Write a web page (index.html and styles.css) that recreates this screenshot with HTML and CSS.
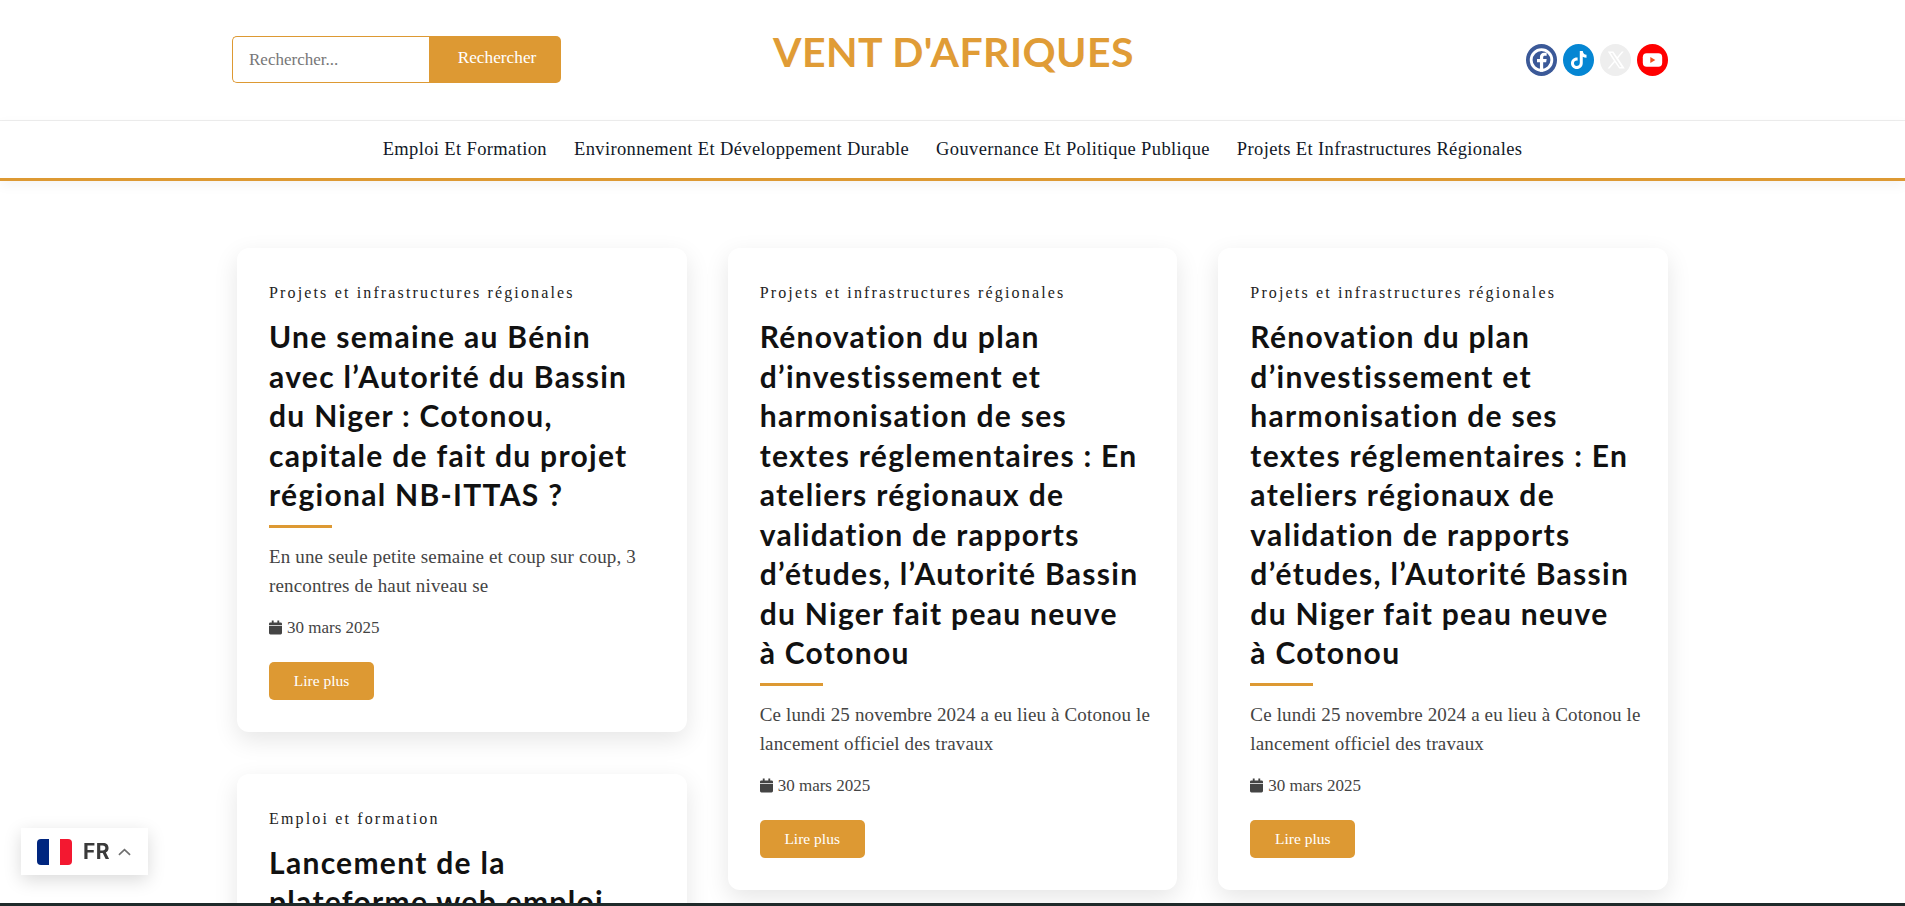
FILE: index.html
```html
<!DOCTYPE html>
<html lang="fr">
<head>
<meta charset="utf-8">
<title>Vent d'Afriques</title>
<link rel="stylesheet" href="styles.css">
</head>
<body>
<header class="masthead">
  <div class="masthead-inner">
    <form class="search">
      <input class="search-input" type="text" placeholder="Rechercher...">
      <button class="search-btn" type="button">Rechercher</button>
    </form>
    <a class="logo">VENT D'AFRIQUES</a>
    <div class="socials">
      <a class="social fb"><svg viewBox="0 0 24 24"><circle cx="12" cy="12" r="8" fill="none" stroke="#fff" stroke-width="2.200"/><path fill="#fff" d="M13.300 21v-7.300h2.300l.4-2.500h-2.700V10c0-.8.3-1.300 1.400-1.300H16V6.500c-.4-.1-1.100-.2-1.900-.2-2 0-3.300 1.200-3.300 3.400v1.500H8.500v2.500h2.300V21z"/></svg></a>
      <a class="social tt"><svg viewBox="0 0 24 24"><path fill="#fff" d="M13 5h2.300c.2 1.700 1.200 2.800 2.900 3v2.300c-1.100 0-2.100-.3-2.900-.9v4.900c0 2.700-2 4.700-4.600 4.700S6.200 17 6.200 14.500c0-2.700 2.300-4.700 5.100-4.400v2.400c-1.500-.3-2.800.6-2.800 2 0 1.200.9 2.100 2 2.100 1.300 0 2.500-.8 2.500-2.500z"/></svg></a>
      <a class="social xx"><svg viewBox="0 0 24 24"><path fill="#fff" d="M6 5.500h4.300l3 4.200 3.600-4.200h1.500l-4.400 5.200 5.200 7.800h-4.300l-3.400-4.800-4.100 4.800H5.900l4.900-5.800zm2.200 1.100 7.100 10.800h1.400L9.600 6.600z"/></svg></a>
      <a class="social yt"><svg viewBox="0 0 24 24"><rect x="4.500" y="6.800" width="15" height="10.400" rx="3" fill="#fff"/><path fill="#f2501e" d="M10.300 9.700v4.600l3.900-2.300z"/></svg></a>
    </div>
  </div>
</header>
<nav class="mainnav">
  <a>Emploi Et Formation</a>
  <a>Environnement Et Développement Durable</a>
  <a>Gouvernance Et Politique Publique</a>
  <a>Projets Et Infrastructures Régionales</a>
</nav>
<main class="grid">
  <div class="col">
    <article class="card">
      <p class="cat">Projets et infrastructures régionales</p>
      <h2 class="title">Une semaine au Bénin<br>avec l’Autorité du Bassin<br>du Niger : Cotonou,<br>capitale de fait du projet<br>régional NB-ITTAS ?</h2>
      <div class="rule"></div>
      <p class="excerpt">En une seule petite semaine et coup sur coup, 3<br>rencontres de haut niveau se</p>
      <p class="date"><svg class="cal" viewBox="0 0 14 15"><path d="M3 0h2v2h4V0h2v2h1.500A1.500 1.500 0 0 1 14 3.500V5H0V3.500A1.500 1.500 0 0 1 1.500 2H3zM0 6h14v7.500a1.500 1.500 0 0 1-1.500 1.500h-11A1.500 1.500 0 0 1 0 13.500z"/></svg>30 mars 2025</p>
      <a class="more">Lire plus</a>
    </article>
    <article class="card">
      <p class="cat">Emploi et formation</p>
      <h2 class="title">Lancement de la<br>plateforme web emploi</h2>
    </article>
  </div>
  <div class="col">
    <article class="card">
      <p class="cat">Projets et infrastructures régionales</p>
      <h2 class="title">Rénovation du plan<br>d’investissement et<br>harmonisation de ses<br>textes réglementaires : En<br>ateliers régionaux de<br>validation de rapports<br>d’études, l’Autorité Bassin<br>du Niger fait peau neuve<br>à Cotonou</h2>
      <div class="rule"></div>
      <p class="excerpt">Ce lundi 25 novembre 2024 a eu lieu à Cotonou le<br>lancement officiel des travaux</p>
      <p class="date"><svg class="cal" viewBox="0 0 14 15"><path d="M3 0h2v2h4V0h2v2h1.500A1.500 1.500 0 0 1 14 3.500V5H0V3.500A1.500 1.500 0 0 1 1.500 2H3zM0 6h14v7.500a1.500 1.500 0 0 1-1.500 1.500h-11A1.500 1.500 0 0 1 0 13.500z"/></svg>30 mars 2025</p>
      <a class="more">Lire plus</a>
    </article>
  </div>
  <div class="col">
    <article class="card">
      <p class="cat">Projets et infrastructures régionales</p>
      <h2 class="title">Rénovation du plan<br>d’investissement et<br>harmonisation de ses<br>textes réglementaires : En<br>ateliers régionaux de<br>validation de rapports<br>d’études, l’Autorité Bassin<br>du Niger fait peau neuve<br>à Cotonou</h2>
      <div class="rule"></div>
      <p class="excerpt">Ce lundi 25 novembre 2024 a eu lieu à Cotonou le<br>lancement officiel des travaux</p>
      <p class="date"><svg class="cal" viewBox="0 0 14 15"><path d="M3 0h2v2h4V0h2v2h1.500A1.500 1.500 0 0 1 14 3.500V5H0V3.500A1.500 1.500 0 0 1 1.500 2H3zM0 6h14v7.500a1.500 1.500 0 0 1-1.500 1.500h-11A1.500 1.500 0 0 1 0 13.500z"/></svg>30 mars 2025</p>
      <a class="more">Lire plus</a>
    </article>
  </div>
</main>
<div class="lang">
  <span class="flag"><i class="blue"></i><i class="white"></i><i class="red"></i></span>
  <span class="lang-code">FR</span>
  <svg class="chev" viewBox="0 0 14 8" width="13" height="8"><path d="M1 7l6-5.500L13 7" fill="none" stroke="#6f6f6f" stroke-width="1.800"/></svg>
</div>
<div class="bottombar"></div>
</body>
</html>
```
FILE: styles.css
```css
* { box-sizing: border-box; }
html, body { margin: 0; height: 906px; overflow: hidden; background: #fff; }
body { font-family: "Liberation Serif", serif; color: #222; }
p, h2 { margin: 0; }
.masthead { height: 121px; border-bottom: 1px solid #eee; }
.masthead-inner { width: 1441px; margin-left: 232px; display: flex; justify-content: space-between; position: relative; }
.search { display: flex; margin-top: 36px; height: 47px; width: 329px; }
.search-input { width: 197px; height: 47px; border: 1px solid #dd9933; border-right: 0; border-radius: 5px 0 0 5px; padding: 0 16px; font: 17px "Liberation Serif", serif; outline: 0; }
.search-input::placeholder { color: #777; opacity: 1; }
.search-btn { width: 132px; height: 47px; background: #dd9933; color: #fff; border: 0; border-radius: 0 5px 5px 0; font: 17.300px "Liberation Serif", serif; padding: 0 0 3px 4px; }
.logo { position: absolute; left: 541px; top: 27px; font: 700 41px "Lato", sans-serif; color: #e09c36; letter-spacing: .45px; }
.socials { display: flex; gap: 6px; margin: 44px 5px 0 0; }
.social { width: 31px; height: 32px; border-radius: 50%; display: block; overflow: hidden; }
.social svg { display: block; width: 100%; height: 100%; }
.fb { background: #3b5998; }
.tt { background: #0586d3; }
.xx { background: #eeeeee; }
.yt { background: #ff0000; }
.mainnav { height: 60px; display: flex; justify-content: center; gap: 27px; align-items: center; border-bottom: 3px solid #dd9933; box-shadow: 0 4px 12px rgba(0,0,0,.05); font-size: 18.500px; letter-spacing: .37px; color: #111827; }
.grid { display: flex; gap: 41px; margin: 67px 0 0 237px; width: 1431px; }
.col { flex: 1; min-width: 0; display: flex; flex-direction: column; gap: 42px; }
.card { background: #fff; border-radius: 12px; box-shadow: 0 8px 24px rgba(0,0,0,.1); padding: 35px 32px 32px; }
.cat { font-size: 16px; letter-spacing: 2.150px; line-height: 20px; color: #222; }
.title { font: 700 30px/39.500px "Lato", sans-serif; letter-spacing: 1.300px; color: #111; margin-top: 14px; }
.rule { width: 63px; height: 3px; background: #dd9933; margin-top: 10px; }
.excerpt { font-size: 19px; letter-spacing: .15px; line-height: 29px; color: #444; margin-top: 14px; white-space: nowrap; }
.date { font-size: 17px; line-height: 20px; color: #444; margin-top: 18px; display: flex; align-items: center; }
.cal { width: 13px; height: 15px; fill: #444; margin-right: 5px; }
.more { display: inline-block; width: 105px; height: 38px; line-height: 38px; text-align: center; background: #dd9933; color: #fff; border-radius: 5px; font-size: 15.500px; margin-top: 24px; }
.lang { position: fixed; left: 21px; top: 828px; width: 127px; height: 47px; background: #fff; box-shadow: 0 5px 18px rgba(0,0,0,.15); display: flex; align-items: center; padding-left: 16px; }
.flag { display: flex; width: 35px; height: 26px; border-radius: 4px; overflow: hidden; }
.flag i { flex: 1; }
.blue { background: #00267f; }
.white { background: #fff; }
.red { background: #f31830; }
.lang-code { font: 700 21px "Inter", sans-serif; color: #3a3a3a; margin-left: 11px; letter-spacing: .5px; }
.chev { margin-left: 8px; }
.bottombar { position: fixed; left: 0; right: 0; bottom: 0; height: 3px; background: #1f2a2a; }
```
